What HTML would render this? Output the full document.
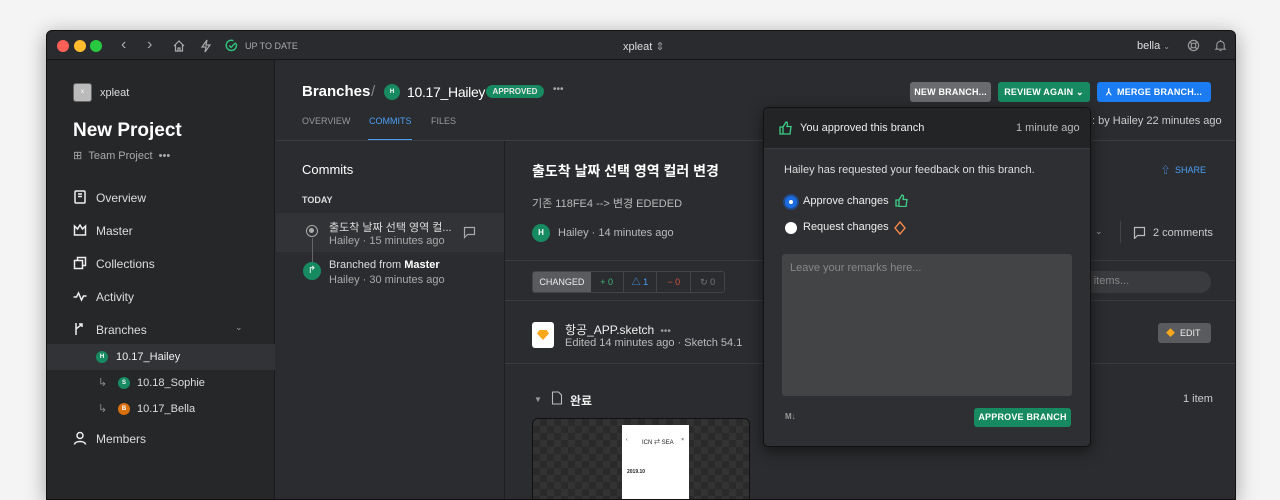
<!DOCTYPE html>
<html><head><meta charset="utf-8"><style>
*{box-sizing:border-box;margin:0;padding:0}
body{width:1280px;height:480px;background:#f4f4f4;font-family:"Liberation Sans","Noto Sans CJK KR",sans-serif;overflow:hidden;position:relative;color:#e8e8e8}
.win{position:absolute;left:46px;top:30px;width:1190px;height:470px;background:#2b2c2f;border-radius:6px 6px 0 0;overflow:hidden;box-shadow:0 4px 20px rgba(0,0,0,.35);border:1px solid #111}
.abs{position:absolute}
.tb{left:0;top:0;width:100%;height:29px;background:#2a2b2e;border-bottom:1px solid #141414}
.dot{width:12px;height:12px;border-radius:50%;top:9px}
.side{left:0;top:29px;width:228px;height:450px;background:#262729;border-right:1px solid #1a1a1a}
.t{position:absolute;white-space:nowrap}
.nav{font-size:12px;color:#ddd}
.hl{background:#3a3b3e;height:1px}
.btn{position:absolute;height:20px;border-radius:3px;font-size:9px;font-weight:bold;color:#fff;text-align:center;line-height:20px;letter-spacing:.2px}
.av{position:absolute;border-radius:50%;font-size:6px;font-weight:bold;color:#fff;text-align:center}
</style></head><body>
<div class="win">
<div class="abs tb">
 <div class="abs dot" style="left:10px;background:#fe5f57"></div>
 <div class="abs dot" style="left:27px;background:#febc2e"></div>
 <div class="abs dot" style="left:43px;background:#28c840"></div>
 <div class="t" style="left:74px;top:5px;font-size:16px;color:#aaa">‹</div>
 <div class="t" style="left:100px;top:5px;font-size:16px;color:#aaa">›</div>
 <svg class="abs" style="left:125px;top:8px" width="14" height="14" viewBox="0 0 14 14" fill="none" stroke="#aaa" stroke-width="1.2"><path d="M2 7L7 2l5 5M3.5 6v6h7V6M6 12V9h2v3"/></svg>
 <svg class="abs" style="left:152px;top:8px" width="14" height="14" viewBox="0 0 14 14" fill="none" stroke="#aaa" stroke-width="1.2"><path d="M8 1L3 8h4l-1 5 5-7H7z"/></svg>
 <svg class="abs" style="left:178px;top:8px" width="13" height="13" viewBox="0 0 14 14" fill="none" stroke="#2ec47a" stroke-width="1.6"><path d="M12 5A5.5 5.5 0 1 1 9 1.8"/><path d="M4.5 7l2 2 5-5"/></svg>
 <div class="t" style="left:198px;top:10px;font-size:9px;color:#aaa">UP TO DATE</div>
 <div class="t" style="left:576px;top:9px;font-size:11px;color:#ddd">xpleat <span style="color:#999">⇕</span></div>
 <div class="t" style="left:1090px;top:9px;font-size:11px;color:#ddd">bella <span style="font-size:8px;color:#999">⌄</span></div>
 <svg class="abs" style="left:1140px;top:8px" width="13" height="13" viewBox="0 0 14 14" fill="none" stroke="#999" stroke-width="1.3"><circle cx="7" cy="7" r="5.5"/><circle cx="7" cy="7" r="2.5"/><path d="M3 3l2.2 2.2M11 3L8.8 5.2M3 11l2.2-2.2M11 11L8.8 8.8"/></svg>
 <svg class="abs" style="left:1167px;top:8px" width="13" height="13" viewBox="0 0 14 14" fill="none" stroke="#999" stroke-width="1.2"><path d="M3 10V6.5a4 4 0 0 1 8 0V10l1 1H2zM6 12.5h2M7 1v1.5"/></svg>
</div>

<div class="abs side">
 <div class="abs" style="left:26px;top:23px;width:19px;height:19px;background:#bbb;border-radius:3px;border:1px solid #666;font-size:6px;color:#fff;text-align:center;line-height:17px">x</div>
 <div class="t" style="left:53px;top:27px;font-size:11px;color:#ddd">xpleat</div>
 <div class="t" style="left:26px;top:60px;font-size:19px;font-weight:bold;color:#fff">New Project</div>
 <div class="t" style="left:26px;top:89px;font-size:11px;color:#aaa">⊞ &nbsp;Team Project &nbsp;•••</div>
 <svg class="abs" style="left:26px;top:130px" width="14" height="14" fill="none" stroke="#eee" stroke-width="1.5"><rect x="2" y="1" width="10" height="12" rx="1"/><path d="M5 4h4M5 6.5h4"/></svg>
 <div class="t nav" style="left:49px;top:131px">Overview</div>
 <svg class="abs" style="left:26px;top:163px" width="14" height="14" fill="none" stroke="#eee" stroke-width="1.5"><path d="M1.5 3l3 3L7 2l2.5 4 3-3V12h-11z"/></svg>
 <div class="t nav" style="left:49px;top:164px">Master</div>
 <svg class="abs" style="left:26px;top:196px" width="14" height="14" fill="none" stroke="#eee" stroke-width="1.5"><rect x="1.5" y="4.5" width="8" height="8"/><path d="M4.5 4.5V1.5h8v8h-3"/></svg>
 <div class="t nav" style="left:49px;top:197px">Collections</div>
 <svg class="abs" style="left:26px;top:229px" width="14" height="14" fill="none" stroke="#eee" stroke-width="1.5"><path d="M0.5 8h3l2-4 3 7 2-4h3"/></svg>
 <div class="t nav" style="left:49px;top:230px">Activity</div>
 <svg class="abs" style="left:26px;top:262px" width="14" height="14" fill="none" stroke="#eee" stroke-width="1.5"><path d="M3 1v12M3 8c0-3 5-3 5-6M6 2h3V5"/></svg>
 <div class="t nav" style="left:49px;top:263px">Branches</div>
 <div class="t" style="left:188px;top:262px;font-size:9px;color:#999">⌄</div>
 <div class="abs" style="left:0;top:284px;width:228px;height:26px;background:#323336"></div>
 <div class="av" style="left:49px;top:291px;width:12px;height:12px;line-height:12px;background:#178a62">H</div>
 <div class="t" style="left:69px;top:291px;font-size:11px;color:#eee">10.17_Hailey</div>
 <div class="t" style="left:51px;top:316px;font-size:11px;color:#888">↳</div>
 <div class="av" style="left:71px;top:317px;width:12px;height:12px;line-height:12px;background:#178a62">S</div>
 <div class="t" style="left:90px;top:317px;font-size:11px;color:#ddd">10.18_Sophie</div>
 <div class="t" style="left:51px;top:342px;font-size:11px;color:#888">↳</div>
 <div class="av" style="left:71px;top:343px;width:12px;height:12px;line-height:12px;background:#d9700f">B</div>
 <div class="t" style="left:90px;top:343px;font-size:11px;color:#ddd">10.17_Bella</div>
 <svg class="abs" style="left:26px;top:371px" width="14" height="14" fill="none" stroke="#eee" stroke-width="1.5"><circle cx="7" cy="4.5" r="3"/><path d="M1.5 13.5c0-4 11-4 11 0"/></svg>
 <div class="t nav" style="left:49px;top:372px">Members</div>
</div>

<!-- header -->
<div class="t" style="left:255px;top:52px;font-size:15px;font-weight:bold;color:#fff">Branches</div>
<div class="t" style="left:324px;top:52px;font-size:15px;color:#888">/</div>
<div class="av" style="left:337px;top:53px;width:16px;height:16px;line-height:16px;background:#178a62">H</div>
<div class="t" style="left:360px;top:53px;font-size:14px;color:#fff;letter-spacing:-0.3px">10.17_Hailey</div>
<div class="abs" style="left:439px;top:54px;width:58px;height:13px;background:#178a62;border-radius:7px;font-size:8px;font-weight:bold;text-align:center;line-height:13px">APPROVED</div>
<div class="t" style="left:506px;top:53px;font-size:10px;color:#aaa">•••</div>
<div class="t" style="left:255px;top:85px;font-size:9px;color:#999">OVERVIEW</div>
<div class="t" style="left:322px;top:85px;font-size:9px;color:#4a9ff5">COMMITS</div>
<div class="abs" style="left:321px;top:108px;width:44px;height:2px;background:#4a9ff5"></div>
<div class="t" style="left:384px;top:85px;font-size:9px;color:#999">FILES</div>
<div class="abs hl" style="left:229px;top:109px;width:961px;background:#3c3d40"></div>
<div class="btn" style="left:863px;top:51px;width:81px;background:#6a6b6e">NEW BRANCH...</div>
<div class="btn" style="left:951px;top:51px;width:92px;background:#178a62">REVIEW AGAIN ⌄</div>
<div class="btn" style="left:1050px;top:51px;width:114px;background:#1a7cf0">⅄ &nbsp;MERGE BRANCH...</div>
<div class="t" style="left:1045px;top:84px;font-size:11px;color:#ccc">: by Hailey 22 minutes ago</div>

<!-- commits column -->
<div class="abs" style="left:457px;top:110px;width:1px;height:360px;background:#1e1f21"></div>
<div class="t" style="left:255px;top:131px;font-size:13px;color:#fff">Commits</div>
<div class="t" style="left:255px;top:164px;font-size:9px;font-weight:bold;color:#ddd">TODAY</div>
<div class="abs" style="left:229px;top:182px;width:228px;height:39px;background:#323336"></div>
<div class="abs" style="left:259px;top:194px;width:12px;height:12px;border-radius:50%;border:1.5px solid #aaa"><div style="margin:2px;width:5px;height:5px;border-radius:50%;background:#aaa"></div></div>
<div class="abs" style="left:265px;top:207px;width:1px;height:28px;background:#666"></div>
<div class="t" style="left:282px;top:188px;font-size:11px;color:#ddd">출도착 날짜 선택 영역 컬...</div>
<div class="t" style="left:282px;top:204px;font-size:11px;color:#aaa">Hailey · 15 minutes ago</div>
<svg class="abs" style="left:416px;top:195px" width="13" height="13" fill="none" stroke="#aaa" stroke-width="1.2"><path d="M1.5 1.5h10v7h-7l-3 3z"/></svg>
<div class="abs" style="left:256px;top:231px;width:18px;height:18px;border-radius:50%;background:#178a62;color:#fff;font-size:10px;text-align:center;line-height:18px">↱</div>
<div class="t" style="left:282px;top:228px;font-size:11px;color:#ddd">Branched from <b style="color:#fff">Master</b></div>
<div class="t" style="left:282px;top:243px;font-size:11px;color:#aaa">Hailey · 30 minutes ago</div>

<!-- main -->
<div class="t" style="left:485px;top:130px;font-size:14px;font-weight:bold;color:#fff">출도착 날짜 선택 영역 컬러 변경</div>
<div class="t" style="left:485px;top:164px;font-size:11px;color:#bbb">기존 118FE4 --&gt; 변경 EDEDED</div>
<div class="av" style="left:485px;top:193px;width:18px;height:18px;line-height:18px;font-size:8px;background:#178a62">H</div>
<div class="t" style="left:511px;top:196px;font-size:11px;color:#bbb">Hailey · 14 minutes ago</div>
<div class="t" style="left:1114px;top:132px;font-size:9px;color:#4a9ff5">⇧ &nbsp;SHARE</div>
<div class="t" style="left:1048px;top:195px;font-size:9px;color:#999">⌄</div>
<div class="abs" style="left:1073px;top:190px;width:1px;height:22px;background:#444"></div>
<svg class="abs" style="left:1086px;top:195px" width="13" height="13" fill="none" stroke="#bbb" stroke-width="1.2"><path d="M1.5 1.5h10v8h-7l-3 3z"/></svg>
<div class="t" style="left:1106px;top:196px;font-size:11px;color:#ccc">2 comments</div>
<div class="abs hl" style="left:458px;top:229px;width:732px"></div>
<div class="abs" style="left:485px;top:240px;width:193px;height:22px;border:1px solid #444;border-radius:3px;font-size:9px;display:flex;overflow:hidden">
 <div style="width:58px;background:#5a5b5e;color:#eee;text-align:center;line-height:20px">CHANGED</div>
 <div style="width:33px;color:#3db87a;text-align:center;line-height:20px;border-right:1px solid #444">+ 0</div>
 <div style="width:34px;color:#4a9ff5;text-align:center;line-height:20px;border-right:1px solid #444">△ 1</div>
 <div style="width:34px;color:#d2553f;text-align:center;line-height:20px;border-right:1px solid #444">− 0</div>
 <div style="width:33px;color:#777;text-align:center;line-height:20px">↻ 0</div>
</div>
<div class="abs" style="left:1030px;top:240px;width:134px;height:22px;border-radius:11px;background:#3a3b3e"></div>
<div class="t" style="left:1040px;top:244px;font-size:11px;color:#888">r items...</div>
<div class="abs hl" style="left:458px;top:269px;width:732px"></div>
<div class="abs" style="left:485px;top:291px;width:22px;height:26px;background:#fff;border-radius:3px"><div style="margin:8px 5px;width:12px;height:10px;background:#f7a81b;clip-path:polygon(20% 0,80% 0,100% 35%,50% 100%,0 35%)"></div></div>
<div class="t" style="left:518px;top:290px;font-size:12px;color:#eee">항공_APP.sketch <span style="color:#999;font-size:10px">&nbsp;•••</span></div>
<div class="t" style="left:518px;top:306px;font-size:11px;color:#bbb">Edited 14 minutes ago · Sketch 54.1</div>
<div class="abs" style="left:1111px;top:292px;width:53px;height:20px;background:#5a5b5e;border-radius:3px;font-size:9px;color:#eee;line-height:20px;padding-left:8px"><span style="color:#f7a81b">◆</span> &nbsp;EDIT</div>
<div class="abs hl" style="left:458px;top:332px;width:732px"></div>
<div class="t" style="left:487px;top:364px;font-size:8px;color:#999">▼</div>
<svg class="abs" style="left:504px;top:360px" width="12" height="14" fill="none" stroke="#bbb" stroke-width="1.1"><path d="M1.5 1h6l3 3v9h-9z"/></svg>
<div class="t" style="left:523px;top:361px;font-size:12px;font-weight:bold;color:#eee">완료</div>
<div class="t" style="left:1136px;top:362px;font-size:11px;color:#ccc">1 item</div>
<div class="abs" style="left:485px;top:387px;width:218px;height:90px;border-radius:6px;border:1px solid #111;background:repeating-conic-gradient(#2a2a2a 0 25%,#333 0 50%) 0 0/14px 14px"></div>
<div class="abs" style="left:575px;top:394px;width:67px;height:90px;background:#fff;font-size:5px;color:#222">
 <div style="position:absolute;left:20px;top:12px;font-size:6px">ICN ⇄ SEA</div>
 <div style="position:absolute;left:4px;top:12px">‹</div><div style="position:absolute;right:5px;top:12px">×</div>
 <div style="position:absolute;left:5px;top:44px;font-weight:bold;font-size:5px">2019.10</div>
</div>

<!-- popup -->
<div class="abs" style="left:716px;top:76px;width:328px;height:340px;background:#2e2f32;border:1px solid #111;border-radius:5px;box-shadow:0 4px 14px rgba(0,0,0,.5);overflow:hidden">
 <div class="abs" style="left:0;top:0;width:100%;height:41px;background:#232426;border-bottom:1px solid #3a3b3e"></div>
 <svg class="abs" style="left:15px;top:13px" width="14" height="14" fill="none" stroke="#3dcf86" stroke-width="1.3"><path d="M1 6h3v7H1zM4 6l3-5c1.5 0 1.5 1 1.5 2L8 5.5h4l-1 7.5H4"/></svg>
 <div class="t" style="left:36px;top:14px;font-size:11px;color:#eee">You approved this branch</div>
 <div class="t" style="left:252px;top:14px;font-size:11px;color:#bbb">1 minute ago</div>
 <div class="t" style="left:20px;top:56px;font-size:11px;color:#ddd">Hailey has requested your feedback on this branch.</div>
 <div class="abs" style="left:21px;top:88px;width:12px;height:12px;border-radius:50%;background:#1a6ce0;box-shadow:0 0 0 2px #224a88"><div style="margin:4px;width:4px;height:4px;border-radius:50%;background:#fff"></div></div>
 <div class="t" style="left:39px;top:87px;font-size:11px;color:#eee">Approve changes</div>
 <svg class="abs" style="left:131px;top:86px" width="13" height="13" fill="none" stroke="#3dcf86" stroke-width="1.3"><path d="M1 6h3v6H1zM4 6l3-5c1.5 0 1.5 1 1.5 2L8 5.5h4l-1 7H4"/></svg>
 <div class="abs" style="left:21px;top:114px;width:12px;height:12px;border-radius:50%;background:#fff"></div>
 <div class="t" style="left:39px;top:113px;font-size:11px;color:#eee">Request changes</div>
 <svg class="abs" style="left:130px;top:113px" width="12" height="14" fill="none" stroke="#f2874a" stroke-width="1.4"><path d="M6 1l5 6-5 6-5-6z"/></svg>
 <div class="abs" style="left:18px;top:146px;width:290px;height:142px;background:#434446;border-radius:3px"></div>
 <div class="t" style="left:26px;top:154px;font-size:11px;color:#888">Leave your remarks here...</div>
 <div class="t" style="left:21px;top:304px;font-size:8px;font-weight:bold;color:#999">M↓</div>
 <div class="btn" style="left:210px;top:300px;width:97px;height:19px;line-height:19px;background:#178a62">APPROVE BRANCH</div>
</div>
</div>
</body></html>
